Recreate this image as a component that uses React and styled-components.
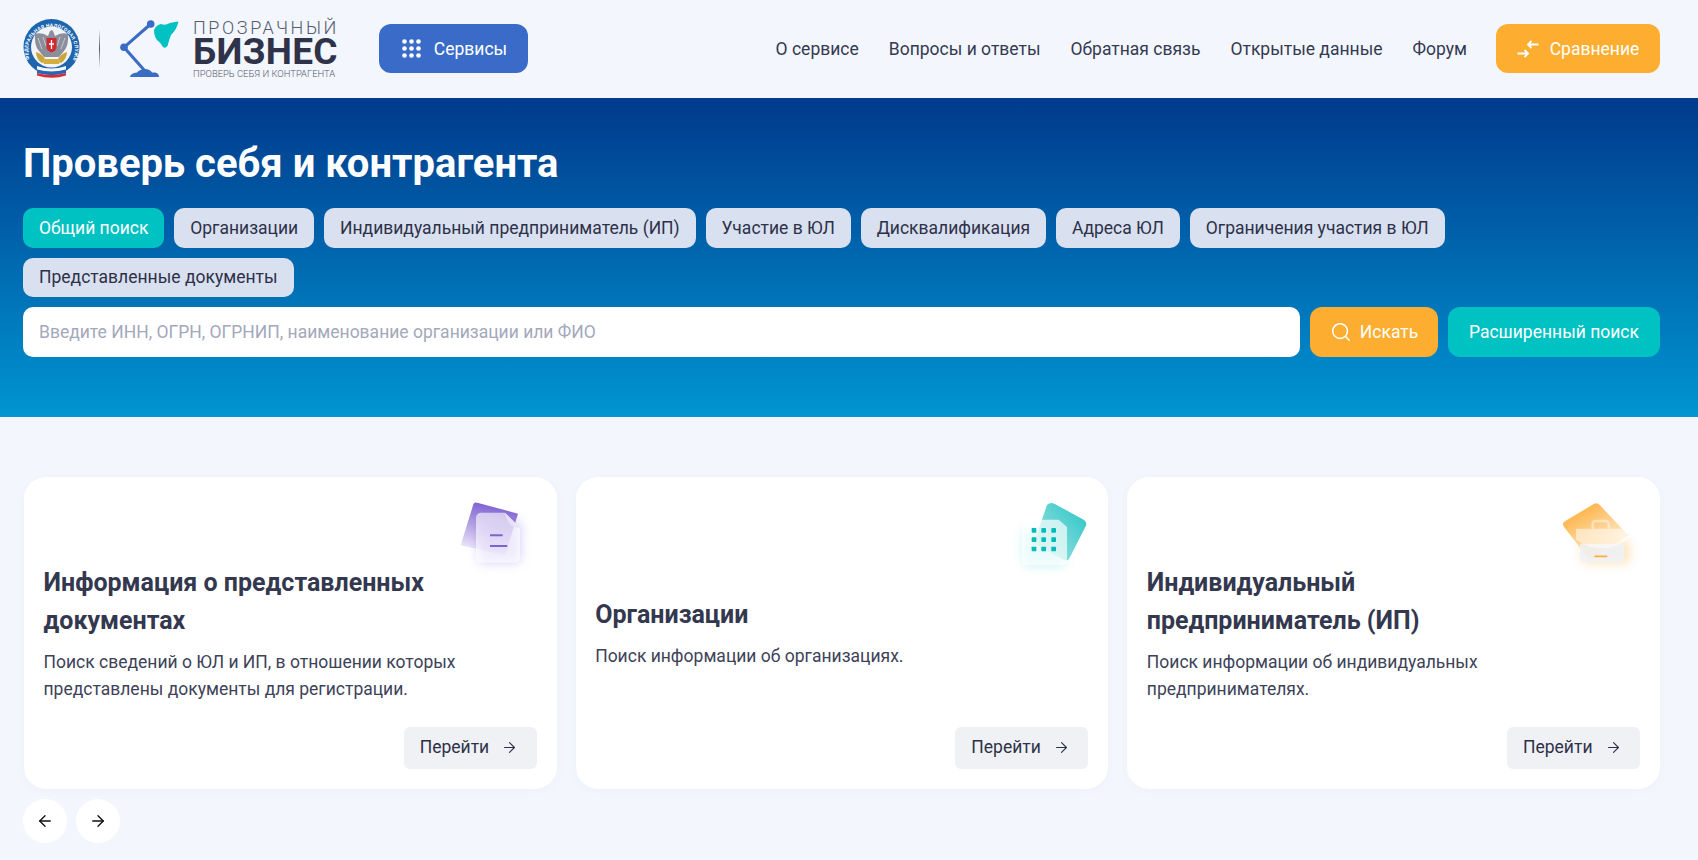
import React from "react";
import styled, { createGlobalStyle } from "styled-components";
import { ArrowLeft, ArrowRight, Search } from "lucide-react";

const Global = createGlobalStyle`
  html, body { margin: 0; padding: 0; background: #f3f6fd; }
  * { box-sizing: border-box; }
  body { font-family: Roboto, "Liberation Sans", sans-serif; color: #2d3148; }
`;

const Page = styled.div`
  width: 1698px;
  min-height: 860px;
  overflow: hidden;
`;

const Header = styled.header`
  height: 98px;
  display: flex;
  align-items: center;
  padding: 0 38px 1px 23px;
  background: #f3f6fd;
`;

const Logo = styled.a`
  display: flex;
  align-items: center;
  width: 356px;
  flex: none;
`;

const Divider = styled.span`
  width: 1px;
  height: 39px;
  margin: 0 20px 0 19px;
  background: linear-gradient(180deg, #f3f6fd, #555b70 50%, #f3f6fd);
`;

const Wordmark = styled.span`
  display: flex;
  flex-direction: column;
  margin-left: 13px;
  color: #2d3148;
`;

const WordTop = styled.span`
  font-size: 18px;
  font-weight: 300;
  line-height: 18px;
  letter-spacing: 2.6px;
  color: #555b70;
  white-space: nowrap;
`;

const WordMain = styled.span`
  font-size: 37px;
  font-weight: 700;
  line-height: 30px;
  letter-spacing: 0.3px;
  color: #2f3349;
`;

const WordSub = styled.span`
  font-size: 9.45px;
  font-weight: 300;
  line-height: 11px;
  margin-top: 1px;
  color: #555b70;
  white-space: nowrap;
`;

const HeaderButton = styled.button`
  display: flex;
  align-items: center;
  justify-content: center;
  gap: ${(p) => p.$gap}px;
  width: ${(p) => p.$width}px;
  height: 49px;
  padding: 0 0 0 ${(p) => p.$shift || 0}px;
  border: 0;
  border-radius: 12px;
  background: ${(p) => p.$bg};
  color: #fff;
  font: 400 17.5px Roboto, sans-serif;
`;

const Nav = styled.nav`
  display: flex;
  align-items: center;
  gap: 30px;
  margin-left: auto;
  margin-right: 29px;
`;

const NavLink = styled.a`
  font-size: 17.5px;
  color: #333a52;
  white-space: nowrap;
`;

const Hero = styled.section`
  padding: 42px 38px 60px 23px;
  background: linear-gradient(180deg, #003a8c 0%, #0095d2 100%);
`;

const Title = styled.h1`
  margin: 0 0 20px;
  font-size: 40px;
  line-height: 48px;
  font-weight: 700;
  color: #fff;
`;

const Tabs = styled.div`
  display: flex;
  flex-wrap: wrap;
  gap: 10px 9.85px;
  margin-bottom: 10px;
`;

const Tab = styled.button`
  height: 39.5px;
  padding: 0 16px;
  border: 0;
  border-radius: 10px;
  background: ${(p) => (p.$active ? "#00c2c2" : "#d9e0f0")};
  color: ${(p) => (p.$active ? "#fff" : "#2d3148")};
  font: 400 17.5px Roboto, sans-serif;
`;

const SearchRow = styled.div`
  display: flex;
  gap: 10px;
`;

const SearchBox = styled.div`
  flex: 1;
  height: 50px;
  display: flex;
  align-items: center;
  padding: 0 16px;
  border-radius: 10px;
  background: #fff;
  color: #a3a8bb;
  font-size: 17.5px;
`;

const SearchButton = styled.button`
  display: flex;
  align-items: center;
  justify-content: center;
  gap: 8px;
  width: ${(p) => p.$width}px;
  height: 50px;
  border: 0;
  border-radius: 12px;
  background: ${(p) => p.$bg};
  color: #fff;
  font: 400 17.5px Roboto, sans-serif;
`;

const Main = styled.main`
  padding: 60px 38px 0 24px;
`;

const Cards = styled.div`
  display: grid;
  grid-template-columns: repeat(3, 1fr);
  gap: 19px;
`;

const Card = styled.article`
  position: relative;
  height: 312px;
  display: flex;
  flex-direction: column;
  padding: 63px 20px 20px 19.5px;
  border-radius: 22px;
  background: #fff;
  box-shadow: 0 2px 10px rgba(60, 80, 140, 0.03);
`;

const CardIcon = styled.svg`
  position: absolute;
  top: 20px;
  right: 20px;
  width: 80px;
  height: 80px;
`;

const CardBody = styled.div`
  flex: 1;
  display: flex;
  flex-direction: column;
  justify-content: center;
`;

const CardTitle = styled.h2`
  margin: 0 0 9px;
  font-size: 25px;
  line-height: 38px;
  font-weight: 700;
  color: #33384f;
`;

const CardText = styled.p`
  margin: 0;
  font-size: 17.5px;
  line-height: 27.5px;
  color: #3d4258;
`;

const CardFoot = styled.div`
  display: flex;
  justify-content: flex-end;
`;

const GoButton = styled.button`
  display: flex;
  align-items: center;
  gap: 12px;
  width: 133px;
  height: 42px;
  padding: 0 0 2px 16px;
  border: 0;
  border-radius: 6px;
  background: #f0f1f5;
  color: #2d3148;
  font: 400 17.5px Roboto, sans-serif;
`;

const Pager = styled.div`
  display: flex;
  gap: 9px;
  margin: 10px 0 0 -1px;
`;

const PagerButton = styled.button`
  width: 44px;
  height: 44px;
  display: flex;
  align-items: center;
  justify-content: center;
  padding: 0;
  border: 0;
  border-radius: 50%;
  background: #fff;
  color: #111;
`;

const EmblemSvg = styled.svg`
  width: 57px;
  height: 60px;
  overflow: visible;
  flex: none;
`;

const Emblem = () => (
  <EmblemSvg viewBox="0 0 57 60">
    <defs>
      <path id="ring" d="M7.500 42 A 23.500 23.500 0 1 1 49.500 42" />
    </defs>
    <circle cx="28.500" cy="28" r="28" fill="#1d65ad" />
    <circle cx="28.500" cy="28" r="20.500" fill="#f2f4f8" />
    <text fontSize="4.900" fontWeight="700" fill="#fff" fontFamily="Roboto, sans-serif" letterSpacing="0.3">
      <textPath href="#ring" startOffset="2">ФЕДЕРАЛЬНАЯ НАЛОГОВАЯ СЛУЖБА</textPath>
    </text>
    <path d="M12 15 q7-2 13 2 l2-5 q1.500-1.500 3 0 l2 5 q6-4 13-2 q1 11-4 17 l-5 6 h-15 l-5-6 q-5-6-4-17z" fill="#8b8f9b" />
    <path d="M15 19 l4 11 M20 18 l3 9 M42 19 l-4 11 M37 18 l-3 9" stroke="#c5c8d0" strokeWidth="1" />
    <path d="M13 33 q7 2 10 9 l-4 2 q-6-4-6-11z M44 33 q-7 2-10 9 l4 2 q6-4 6-11z" fill="#c9a63c" />
    <path d="M19 40 h19 l-2 5 h-15z" fill="#d4ae3f" />
    <path d="M23.500 19 h10 v9 q0 4-5 5.500 q-5-1.500-5-5.500z" fill="#cf2a2f" />
    <path d="M28.500 21 v9 M26 25 h5" stroke="#fff" strokeWidth="1.300" />
    <path d="M14 47 q14 5 29 0 v4 q-14 4-29 0z" fill="#f4f6fa" />
    <path d="M14 50.500 q14 4 29 0 v3.500 q-14 4-29 0z" fill="#2a66b8" />
    <path d="M14 54 q14 4 29 0 v2.500 q-14 4.500-29 0z" fill="#d22f35" />
  </EmblemSvg>
);

const Lamp = () => (
  <svg width="60" height="60" viewBox="120 20 60 60">
    <path d="M150.700 25 L124 48.300 L145 72" fill="none" stroke="#3a6bc5" strokeWidth="3" />
    <circle cx="150.700" cy="25" r="3.800" fill="#3a6bc5" />
    <circle cx="124" cy="48.300" r="3.800" fill="#3a6bc5" />
    <path d="M130 78 Q130.500 74 137 73.500 Q140 70 145 70 Q150 70 152 73.500 H155 Q159 74 159 78Z" fill="#3a6bc5" />
    <path d="M154 31 Q156 26 161 25 Q165 27 170 24 Q175 22.500 178.500 22.500 Q177 30 171 36 Q169 41 167.500 47 Q165 50 163 48 Q160 43 157 41 Q154 37 154 31Z" fill="#00c2c2" />
  </svg>
);

const GridDots = () => (
  <svg width="19" height="19" viewBox="0 0 19 19" fill="#fff">
    {[2.500, 9.500, 16.500].flatMap((y) =>
      [2.500, 9.500, 16.500].map((x) => <circle key={`${x}-${y}`} cx={x} cy={y} r="2.300" />)
    )}
  </svg>
);

const CompareIcon = () => (
  <svg width="22" height="18" viewBox="0 0 22 18" fill="none" stroke="#fff" strokeWidth="1.800">
    <path d="M21.500 4.500 H11 M14.500 1 L11 4.500 L14.500 8" />
    <path d="M0.500 13.500 H11 M7.500 10 L11 13.500 L7.500 17" />
  </svg>
);

const DocIcon = () => (
  <CardIcon viewBox="81 50 240 240">
    <defs>
      <linearGradient id="docBack" x1="0.500" y1="0" x2="0.300" y2="1">
        <stop offset="0" stopColor="#7a5bd0" />
        <stop offset="1" stopColor="#7a5bd0" stopOpacity="0.050" />
      </linearGradient>
      <filter id="docBlur" x="-50%" y="-50%" width="200%" height="200%"><feGaussianBlur stdDeviation="18" /></filter>
    </defs>
    <rect x="145" y="120" width="125" height="125" rx="14" fill="#8f78e6" opacity="0.400" filter="url(#docBlur)" />
    <path d="M130 72 Q133 64 142 67 L264 100 L225 225 L92 195 Z" fill="url(#docBack)" />
    <path d="M155 97 H225 L270 142 V230 Q270 247 253 247 H155 Q138 247 138 230 V114 Q138 97 155 97Z" fill="#fff" fillOpacity="0.620" />
    <path d="M225 97 L270 142 Q235 145 225 97Z" fill="#e7e2f8" />
    <path d="M180 165 H218 M180 197 H232" stroke="#7d62d2" strokeWidth="6" />
  </CardIcon>
);

const OrgIcon = () => (
  <CardIcon viewBox="53 50 240 240">
    <defs>
      <linearGradient id="orgBack" x1="0.900" y1="0.200" x2="0.100" y2="0.900">
        <stop offset="0" stopColor="#3cc9c9" />
        <stop offset="1" stopColor="#9fe3e3" />
      </linearGradient>
      <filter id="orgBlur" x="-50%" y="-50%" width="200%" height="200%"><feGaussianBlur stdDeviation="16" /></filter>
    </defs>
    <rect x="100" y="145" width="125" height="110" rx="14" fill="#5fdcdc" opacity="0.400" filter="url(#orgBlur)" />
    <path d="M170 74 Q180 64 192 70 L280 118 Q292 126 286 138 L238 232 Q232 244 220 238 L130 190 Z" fill="url(#orgBack)" />
    <path d="M110 118 H205 L230 140 V238 Q230 255 213 255 H112 Q95 255 95 238 V133 Q95 118 110 118Z" fill="#fff" fillOpacity="0.680" />
    {[150, 178, 206].flatMap((y) =>
      [131, 160, 190].map((x) => <rect key={`${x}-${y}`} x={x - 7} y={y - 7} width="14" height="14" rx="2" fill="#00bcbc" />)
    )}
  </CardIcon>
);

const CaseIcon = () => (
  <CardIcon viewBox="60 50 240 240">
    <defs>
      <linearGradient id="caseBack" x1="0.100" y1="0.100" x2="0.700" y2="1">
        <stop offset="0" stopColor="#fdae3a" />
        <stop offset="1" stopColor="#fdae3a" stopOpacity="0.080" />
      </linearGradient>
      <filter id="caseBlur" x="-50%" y="-50%" width="200%" height="200%"><feGaussianBlur stdDeviation="15" /></filter>
    </defs>
    <rect x="125" y="180" width="145" height="70" rx="14" fill="#fdc873" opacity="0.450" filter="url(#caseBlur)" />
    <path d="M160 72 Q172 65 180 75 L265 165 L150 240 L72 140 Q64 128 76 122 Z" fill="url(#caseBack)" />
    <path d="M120 190 H252 V232 Q252 245 238 245 H134 Q120 245 120 232Z" fill="#eef2fb" fillOpacity="0.800" />
    <path d="M158 145 V130 Q158 122 166 122 H198 Q206 122 206 130 V145" fill="none" stroke="#fff" strokeOpacity="0.450" strokeWidth="7" />
    <path d="M108 145 H262 V178 Q230 202 185 204 Q140 202 108 178Z" fill="#fff" fillOpacity="0.500" />
    <path d="M165 228 H200" stroke="#fdae3a" strokeWidth="5" strokeLinecap="round" />
  </CardIcon>
);

const tabs = ["Общий поиск", "Организации", "Индивидуальный предприниматель (ИП)", "Участие в ЮЛ", "Дисквалификация", "Адреса ЮЛ", "Ограничения участия в ЮЛ", "Представленные документы"];
const navLinks = ["О сервисе", "Вопросы и ответы", "Обратная связь", "Открытые данные", "Форум"];
const cards = [
  { icon: <DocIcon />, title: ["Информация о представленных", "документах"], text: ["Поиск сведений о ЮЛ и ИП, в отношении которых", "представлены документы для регистрации."] },
  { icon: <OrgIcon />, title: ["Организации"], text: ["Поиск информации об организациях."] },
  { icon: <CaseIcon />, title: ["Индивидуальный", "предприниматель (ИП)"], text: ["Поиск информации об индивидуальных", "предпринимателях."] },
];

export default function App() {
  return (
    <Page>
      <Global />
      <Header>
        <Logo>
          <Emblem />
          <Divider />
          <Lamp />
          <Wordmark>
            <WordTop>ПРОЗРАЧНЫЙ</WordTop>
            <WordMain>БИЗНЕС</WordMain>
            <WordSub>ПРОВЕРЬ СЕБЯ И КОНТРАГЕНТА</WordSub>
          </Wordmark>
        </Logo>
        <HeaderButton $bg="#3a6bc9" $width={149} $gap={13} $shift={2}><GridDots />Сервисы</HeaderButton>
        <Nav>{navLinks.map((l) => <NavLink key={l}>{l}</NavLink>)}</Nav>
        <HeaderButton $bg="#fdae31" $width={164} $gap={11}><CompareIcon />Сравнение</HeaderButton>
      </Header>
      <Hero>
        <Title>Проверь себя и контрагента</Title>
        <Tabs>{tabs.map((t, i) => <Tab key={t} $active={i === 0}>{t}</Tab>)}</Tabs>
        <SearchRow>
          <SearchBox>Введите ИНН, ОГРН, ОГРНИП, наименование организации или ФИО</SearchBox>
          <SearchButton $bg="#fdae31" $width={128}><Search size={22} strokeWidth={1.700} />Искать</SearchButton>
          <SearchButton $bg="#00c2c2" $width={212}>Расширенный поиск</SearchButton>
        </SearchRow>
      </Hero>
      <Main>
        <Cards>
          {cards.map((c) => (
            <Card key={c.title[0]}>
              {c.icon}
              <CardBody>
                <CardTitle>{c.title.map((l) => <div key={l}>{l}</div>)}</CardTitle>
                <CardText>{c.text.map((l) => <div key={l}>{l}</div>)}</CardText>
              </CardBody>
              <CardFoot><GoButton>Перейти<ArrowRight size={17} strokeWidth={1.600} /></GoButton></CardFoot>
            </Card>
          ))}
        </Cards>
        <Pager>
          <PagerButton><ArrowLeft size={18} strokeWidth={1.800} /></PagerButton>
          <PagerButton><ArrowRight size={18} strokeWidth={1.800} /></PagerButton>
        </Pager>
      </Main>
    </Page>
  );
}
